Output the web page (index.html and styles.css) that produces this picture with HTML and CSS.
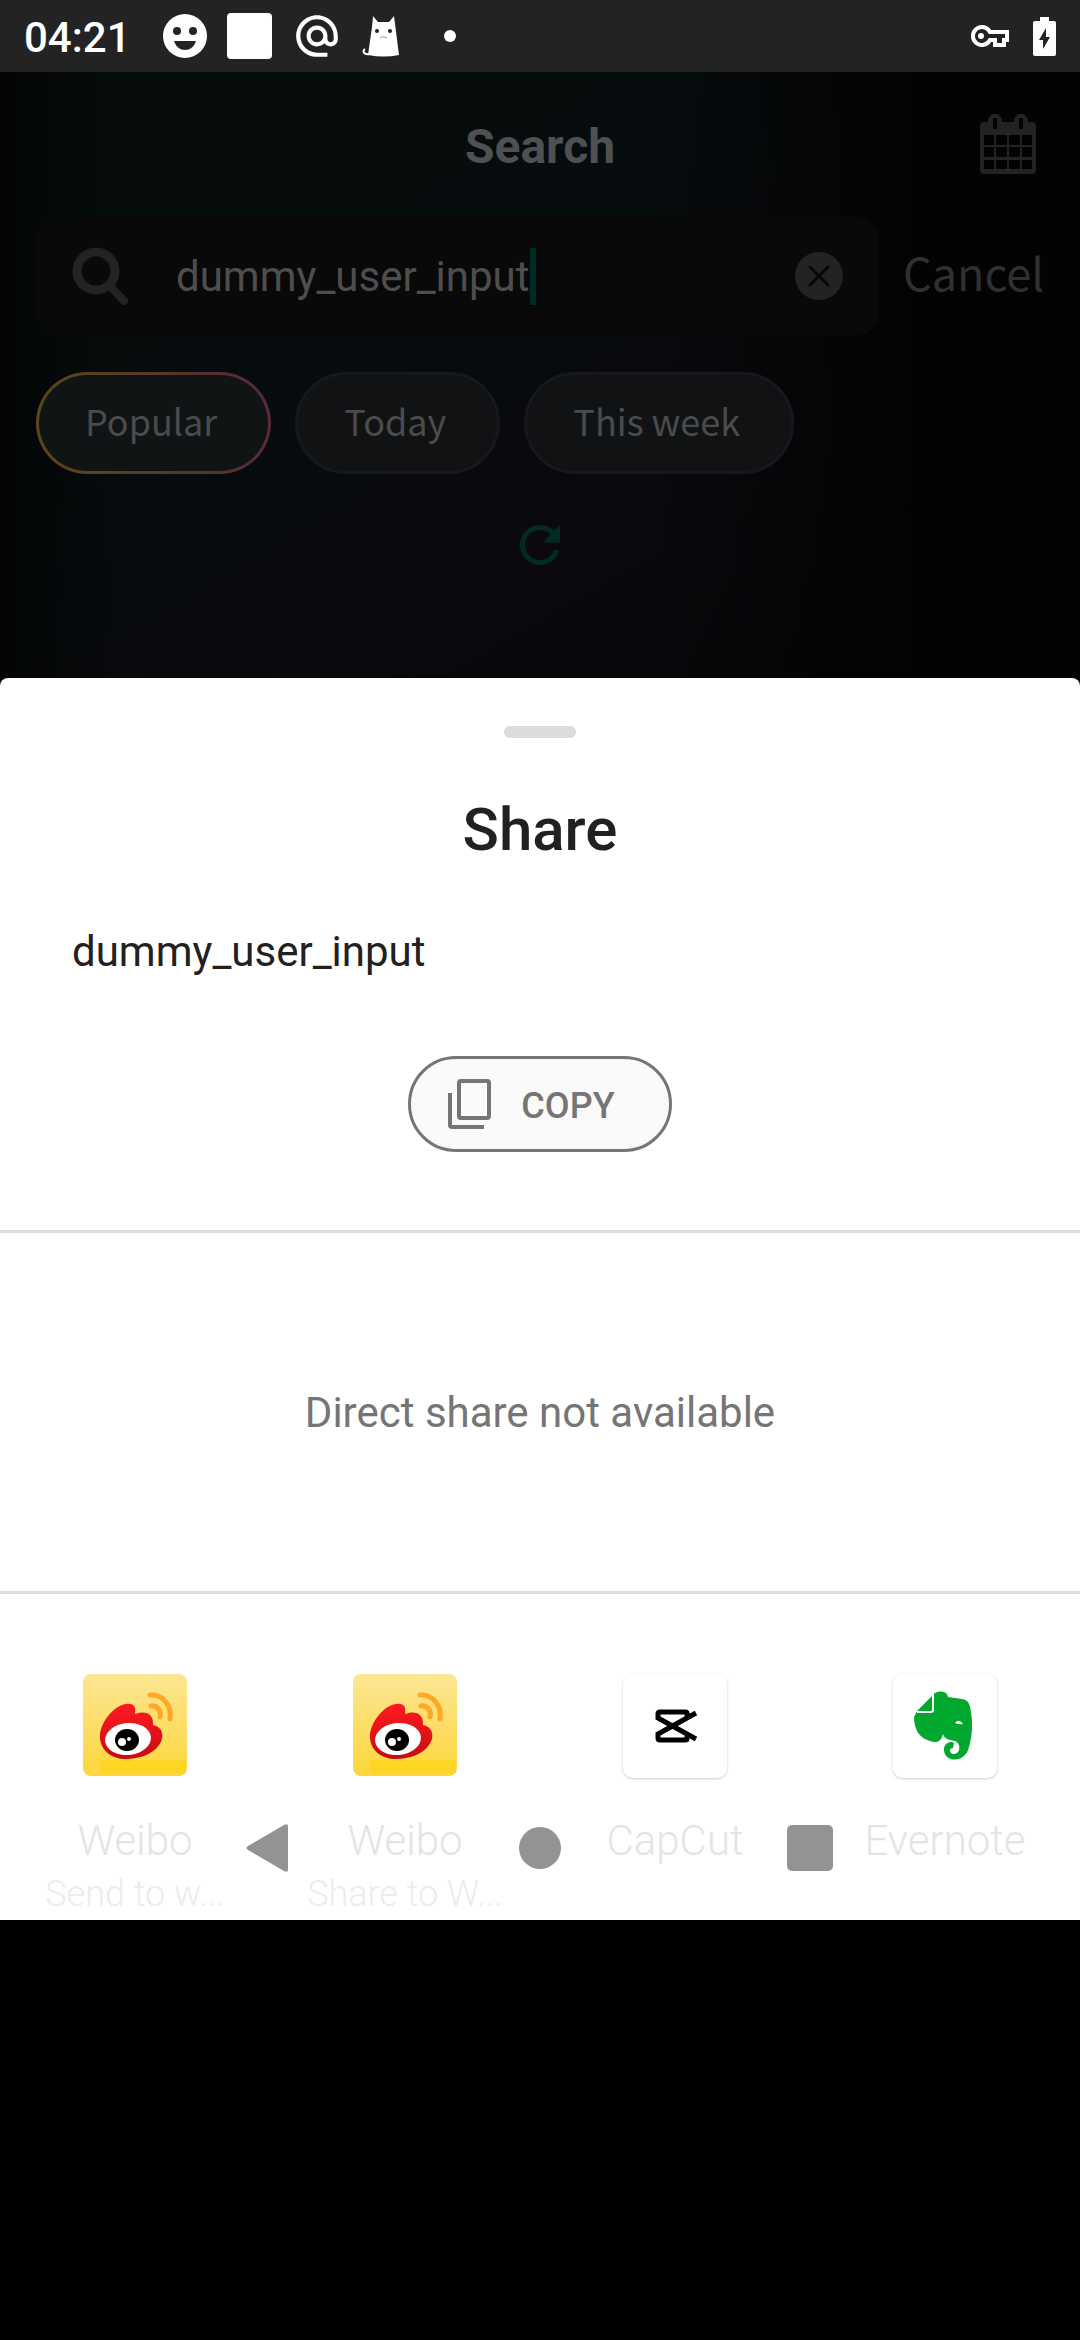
FILE: index.html
```html
<!DOCTYPE html>
<html lang="en">
<head>
<meta charset="utf-8">
<meta name="viewport" content="width=device-width, initial-scale=1">
<title>Share</title>
<link rel="stylesheet" href="styles.css">
</head>
<body>
<svg class="defs" aria-hidden="true">
  <defs>
    <linearGradient id="sun" x1="0" y1="0" x2="0" y2="1">
      <stop offset="0" stop-color="#fce694"/><stop offset="1" stop-color="#fdd63a"/>
    </linearGradient>
    <linearGradient id="flame" x1="0" y1="0" x2="0" y2="1">
      <stop offset="0" stop-color="#ff1a22"/><stop offset="1" stop-color="#c80c10"/>
    </linearGradient>
    <symbol id="weibo" viewBox="0 0 104 104">
      <rect width="104" height="102" rx="8" fill="url(#sun)"/>
      <path d="M17 86H103V99H17Z" fill="#fdd526"/>
      <path d="M17 64C16 51 29 32 43 30C52 29 53 34 52 40C59 37 71 37 70 51C80 53 82 63 76 71C70 80 56 85 43 85C29 85 18 77 17 64Z" fill="url(#flame)"/>
      <ellipse cx="45" cy="65" rx="23" ry="16" fill="#fff" transform="rotate(-5 45 65)"/>
      <ellipse cx="44" cy="66" rx="12" ry="11"/>
      <circle cx="39" cy="68" r="4" fill="#fff"/><circle cx="46" cy="65" r="2" fill="#fff"/>
      <path d="M67 21C80 20 89 32 87 45M68 32C74 31 79 37 77 43" fill="none" stroke="#ffa726" stroke-width="5" stroke-linecap="round"/>
    </symbol>
  </defs>
</svg>

<header class="status">
  <time class="clock">04:21</time>
  <div class="notices">
    <svg width="44" height="44" viewBox="0 0 44 44"><circle cx="22" cy="22" r="22" fill="#fff"/><circle cx="14" cy="17" r="4"/><circle cx="30" cy="17" r="4"/><path d="M11 27H33C31 33 27 36 22 36S13 33 11 27Z"/></svg>
    <svg width="45" height="46" viewBox="0 0 45 46"><rect width="45" height="46" rx="4" fill="#fff"/></svg>
    <svg width="50" height="50" viewBox="0 0 24 24"><path fill="#fff" d="M12 2C6.480 2 2 6.480 2 12s4.480 10 10 10h5v-2h-5c-4.340 0-8-3.660-8-8s3.660-8 8-8 8 3.660 8 8v1.430c0 .79-.71 1.570-1.500 1.570s-1.500-.78-1.500-1.570V12c0-2.760-2.240-5-5-5s-5 2.240-5 5 2.240 5 5 5c1.380 0 2.640-.56 3.540-1.470.65.89 1.770 1.470 2.960 1.470 1.970 0 3.500-1.600 3.500-3.570V12c0-5.520-4.480-10-10-10zm0 13c-1.660 0-3-1.340-3-3s1.340-3 3-3 3 1.340 3 3-1.340 3-3 3z"/></svg>
    <svg width="38" height="42" viewBox="0 0 38 42"><path d="M11 1L16 7H27L32 1L37 40Q22 43 6 40L10 12Z" fill="#fff"/><path d="M7 39C2 40 0 36 3 34" fill="none" stroke="#fff" stroke-width="2"/><circle cx="15" cy="16" r="2"/><circle cx="28" cy="16" r="2"/><path d="M18 23Q21 20 25 23" fill="none" stroke="#999"/></svg>
    <svg class="more" width="12" height="12" viewBox="0 0 12 12"><circle cx="6" cy="6" r="6" fill="#fff"/></svg>
  </div>
  <svg width="38" height="22" viewBox="0 0 38 22"><path d="M19 7A9 9 0 1 0 19 15H24V20H33V15H36V7Z" fill="none" stroke="#fff" stroke-width="4"/><circle cx="10" cy="11" r="3" fill="#fff"/></svg>
  <svg width="23" height="39" viewBox="0 0 23 39"><path d="M7 0H16V4H21Q23 4 23 6V37Q23 39 21 39H2Q0 39 0 37V6Q0 4 2 4H7Z" fill="#fff"/><path d="M13 11L6 23H10V32L17 20H13Z"/></svg>
</header>

<main class="screen">
  <section class="search">
    <div class="topbar">
      <h1 class="title">Search</h1>
      <button class="plain calendar" aria-label="Calendar">
        <svg width="56" height="60" viewBox="0 0 56 60"><path fill="#232323" fill-rule="evenodd" d="M4 8H8C8-3 22-3 22 8H34C34-3 48-3 48 8H52Q56 8 56 12V56Q56 60 52 60H4Q0 60 0 56V12Q0 8 4 8ZM13 4V15H17V4ZM39 4V15H43V4ZM4 21V31H14V21ZM16 21V31H27V21ZM29 21V31H40V21ZM42 21V31H52V21ZM4 33V43H14V33ZM16 33V43H27V33ZM29 33V43H40V33ZM42 33V43H52V33ZM4 46V55H14V46ZM16 46V55H27V46ZM29 46V55H40V46ZM42 46V55H52V46Z"/></svg>
      </button>
    </div>
    <form class="query">
      <div class="field">
        <svg width="56" height="58" viewBox="0 0 56 58" fill="none" stroke="#232323"><circle cx="24" cy="24" r="19" stroke-width="9"/><path d="M39 40L52 54" stroke-width="8" stroke-linecap="round"/></svg>
        <input class="input" type="text" value="dummy_user_input" aria-label="Search">
        <span class="caret"></span>
        <button class="plain clear" type="button" aria-label="Clear">
          <svg width="48" height="48" viewBox="0 0 48 48"><circle cx="24" cy="24" r="24" fill="#232323"/><path d="M15 15L33 33M33 15L15 33" stroke="#080808" stroke-width="3" stroke-linecap="round"/></svg>
        </button>
      </div>
      <button class="plain cancel" type="button">Cancel</button>
    </form>
    <div class="chips">
      <button class="chip active">Popular</button>
      <button class="chip">Today</button>
      <button class="chip">This week</button>
    </div>
    <svg class="refresh" width="40" height="40" viewBox="4 4 16 16"><path fill="#012b25" d="M17.650 6.350C16.200 4.900 14.210 4 12 4c-4.420 0-7.990 3.580-7.990 8s3.570 8 7.990 8c3.730 0 6.840-2.550 7.730-6h-2.080c-.82 2.330-3.040 4-5.650 4-3.310 0-6-2.690-6-6s2.690-6 6-6c1.660 0 3.140.69 4.220 1.780L13 11h7V4l-2.350 2.350z"/></svg>
  </section>

  <section class="sheet">
    <div class="handle"></div>
    <h2 class="heading">Share</h2>
    <p class="shared">dummy_user_input</p>
    <button class="copy">
      <svg width="43" height="50" viewBox="0 0 43 50" fill="none" stroke="#757575" stroke-width="4"><rect x="11" y="2" width="30" height="37" rx="2"/><path d="M2 14V46Q2 48 4 48H36"/></svg>
      <span>COPY</span>
    </button>
    <p class="direct">Direct share not available</p>
    <ul class="apps">
      <li><a class="app" href="#"><svg class="logo" width="104" height="104"><use href="#weibo"/></svg><span class="name">Weibo</span><span class="detail">Send to w...</span></a></li>
      <li><a class="app" href="#"><svg class="logo" width="104" height="104"><use href="#weibo"/></svg><span class="name">Weibo</span><span class="detail">Share to W...</span></a></li>
      <li><a class="app" href="#"><svg class="logo framed" width="104" height="104" viewBox="0 0 104 104"><path d="M64 42V39Q64 38 62 38H37Q35 38 35 40V44L73 65M64 62V65Q64 66 62 66H37Q35 66 35 64V60L73 39" fill="none" stroke="#000" stroke-width="5"/></svg><span class="name">CapCut</span></a></li>
      <li><a class="app" href="#"><svg class="logo framed" width="104" height="104" viewBox="0 0 104 104"><path fill="#00a82d" d="M24 37L40 21C43 16 54 16 55 23L69 25C76 26 77 31 78 38C80 51 79 65 75 76C71 88 53 89 51 77C50 70 57 66 61 69L60 74C56 74 56 79 60 80C67 81 69 70 62 67C55 66 51 64 50 60C48 69 42 69 37 67C26 64 21 55 21 43Z"/><path d="M24 38H38Q40 38 40 36V20" fill="none" stroke="#fff" stroke-width="2"/><path d="M62 49Q66 44 70 50Q66 51 62 49Z" fill="#fff"/></svg><span class="name">Evernote</span></a></li>
    </ul>
    <nav class="navbar">
      <button class="plain" aria-label="Back"><svg width="48" height="48" viewBox="0 0 48 48"><path d="M2 22Q-1 24 2 26L38 47Q42 49 42 46V2Q42-1 38 1Z" fill="#939393"/></svg></button>
      <button class="plain" aria-label="Home"><svg width="48" height="48" viewBox="0 0 48 48"><circle cx="24" cy="24" r="21" fill="#939393"/></svg></button>
      <button class="plain" aria-label="Recents"><svg width="48" height="48" viewBox="0 0 48 48"><rect x="1" y="1" width="46" height="46" rx="5" fill="#939393"/></svg></button>
    </nav>
  </section>
</main>
</body>
</html>
```

FILE: styles.css
```css
* { box-sizing: border-box; }

body {
  margin: 0;
  min-height: 100vh;
  background: #000;
  font-family: Roboto, "Liberation Sans", sans-serif;
}

h1, h2, p, ul { margin: 0; padding: 0; }
svg { display: block; flex: none; }
.defs { position: absolute; width: 0; height: 0; }

.plain {
  display: flex;
  padding: 0;
  border: 0;
  background: none;
}

/* status bar */
.status {
  display: flex;
  align-items: center;
  gap: 24px;
  height: 72px;
  padding: 0 24px;
  background: #232323;
  color: #fff;
  fill: #232323;
}
.clock { padding-top: 3px; font-size: 42px; font-weight: 500; line-height: 48px; }
.notices { display: flex; flex: 1; align-items: center; gap: 20px; padding-left: 8px; }
.more { margin-left: 24px; }

/* dimmed search screen */
.search {
  padding: 0 36px 113px;
  background:
    linear-gradient(90deg, transparent 60%, #030303 84%),
    linear-gradient(90deg, #030505, transparent 12%),
    linear-gradient(150deg, #060d0c 20%, #070b0e 45%, #0b080d 70%, #050406);
}
.topbar {
  display: grid;
  grid-template-columns: 1fr auto 1fr;
  align-items: center;
  height: 144px;
  padding: 0 8px;
}
.title {
  grid-column: 2;
  padding-top: 6px;
  color: #4e5051;
  font-size: 48px;
  font-weight: 700;
  line-height: 56px;
}
.calendar { justify-self: end; }

.query { display: flex; align-items: center; gap: 24px; }
.field {
  display: flex;
  flex: 1;
  align-items: center;
  height: 120px;
  padding: 0 36px;
  border-radius: 24px;
  background: #090909;
}
.input {
  field-sizing: content;
  margin-left: 48px;
  padding: 2px 0 0;
  border: 0;
  background: none;
  color: #4e4e4e;
  font: 400 42px/56px Roboto, "Liberation Sans", sans-serif;
}
.caret { width: 6px; height: 57px; background: #012b25; }
.clear { margin-left: auto; }
.cancel {
  padding-bottom: 8px;
  color: #303030;
  font: 400 45px/64px "Noto Sans CJK SC", sans-serif;
}

.chips { display: flex; gap: 24px; padding-top: 36px; }
.chip {
  height: 102px;
  padding: 0 51px 6px 46px;
  border: 3px solid #17181b;
  border-radius: 51px;
  background: #111214;
  color: #4a4b4c;
  font: 400 36px/56px "Noto Sans CJK SC", sans-serif;
}
.active {
  border-color: transparent;
  background:
    linear-gradient(#101415, #101415) padding-box,
    linear-gradient(80deg, #584818, #583828 55%, #58283c) border-box;
}
.refresh { margin: 51px auto 0; }

/* share sheet */
.sheet {
  position: relative;
  display: flex;
  flex-direction: column;
  padding: 48px 0 5px;
  border-radius: 8px 8px 0 0;
  background: #fff;
}
.handle {
  align-self: center;
  width: 72px;
  height: 12px;
  border-radius: 6px;
  background: #dcdcdc;
}
.heading {
  margin-top: 56px;
  color: #212121;
  font-size: 60px;
  font-weight: 500;
  line-height: 72px;
  text-align: center;
}
.shared {
  margin-top: 62px;
  padding: 0 72px;
  color: #212121;
  font-size: 42px;
  line-height: 48px;
}
.copy {
  display: flex;
  align-self: center;
  align-items: center;
  gap: 30px;
  height: 96px;
  margin: 80px 0 78px;
  padding: 0 54px 0 37px;
  border: 3px solid #757575;
  border-radius: 48px;
  background: #fafafa;
  color: #757575;
  font: 500 36px/48px Roboto, "Liberation Sans", sans-serif;
}
.copy span { padding-top: 3px; }
.direct {
  padding: 156px 0 154px;
  border: solid #dcdcdc;
  border-width: 3px 0;
  color: #757575;
  font-size: 42px;
  line-height: 48px;
  text-align: center;
}
.apps {
  display: grid;
  grid-template-columns: repeat(4, 1fr);
  padding-top: 80px;
  list-style: none;
}
.app {
  display: flex;
  flex-direction: column;
  align-items: center;
  text-decoration: none;
  font-weight: 300;
}
.logo { margin-bottom: 39px; }
.framed {
  border-radius: 10px;
  box-shadow: 0 1px 3px #ccc;
}
.name { color: #e4e4e4; font-size: 42px; line-height: 48px; }
.detail { margin-top: 8px; color: #ececec; font-size: 36px; line-height: 42px; }

/* system navigation over the sheet */
.navbar {
  position: absolute;
  inset: auto 0 48px;
  display: grid;
  grid-template-columns: repeat(3, 25%);
  justify-content: center;
  justify-items: center;
}
```
